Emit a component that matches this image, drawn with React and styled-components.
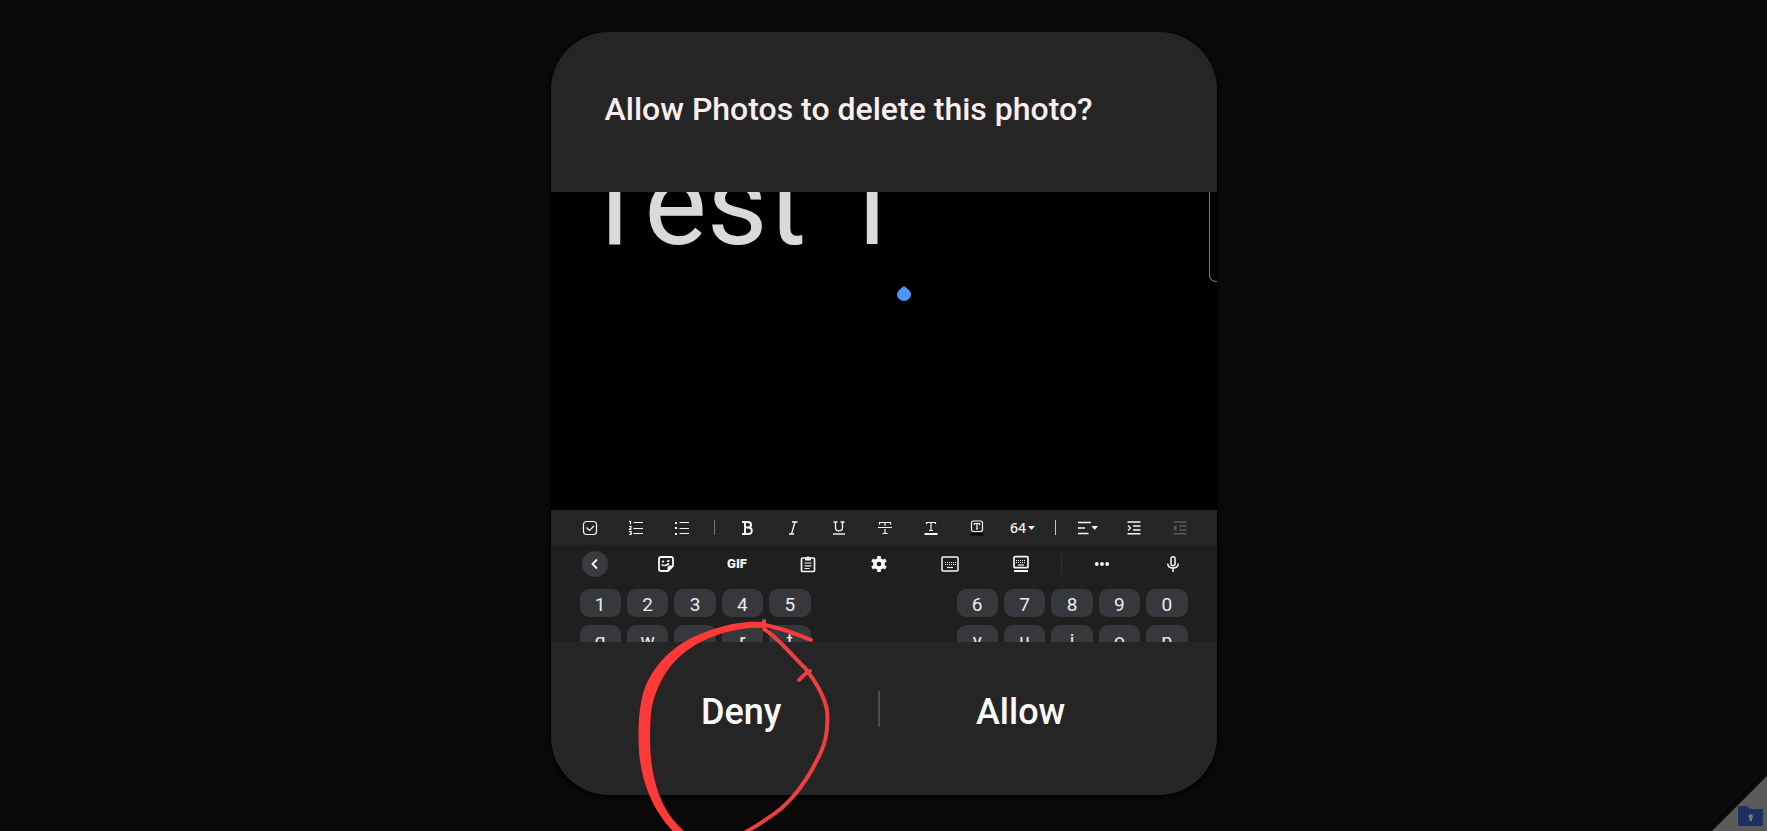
import React from "react";
import styled, { createGlobalStyle, css } from "styled-components";

const GlobalStyle = createGlobalStyle`
  *, *::before, *::after { box-sizing: border-box; }
  body { margin: 0; background: #0a0809; font-family: Roboto, "Liberation Sans", sans-serif; }
`;

const Page = styled.main`
  position: relative;
  display: flex;
  justify-content: center;
  align-items: flex-start;
  min-height: 100vh;
  padding: 32px 16px 36px;
  overflow: hidden;
`;

const Dialog = styled.section`
  position: relative;
  display: flex;
  flex-direction: column;
  width: 100%;
  max-width: 666px;
  border-radius: 58px;
  background: #252525;
  box-shadow: 0 2px 4px #000;
`;

const Title = styled.h1`
  margin: 0;
  padding: 53px 54px 59px;
  font-size: 32px;
  line-height: 48px;
  font-weight: 500;
  color: #f9eff1;
`;

const Preview = styled.div`
  display: flex;
  flex-direction: column;
  height: 450px;
  overflow: hidden;
  background: #1f1f1f;
`;

const Note = styled.div`
  position: relative;
  flex: none;
  height: 318px;
  overflow: hidden;
  background: #000;
`;

const NoteText = styled.p`
  margin: -60px 0 0 29px;
  font-size: 118px;
  line-height: 144px;
  color: #dadada;
  white-space: pre;
`;

const CursorHandle = styled.svg`
  position: absolute;
  left: 346px;
  top: 93px;
  width: 14px;
  height: 17px;
`;

const SideHandle = styled.div`
  position: absolute;
  right: 0;
  top: 0;
  width: 8px;
  height: 90px;
  border: solid #7a7a7a;
  border-width: 0 0 1px 1px;
  border-radius: 0 0 0 7px;
`;

const Bar = styled.div`
  display: flex;
  flex: none;
  align-items: center;
  color: #f6f6f6;
  ${(p) =>
    p.$format
      ? css`height: 35px; padding: 0 14px 0 16px; background: #252525;`
      : css`height: 38px; padding: 0 8px 0 9px;`}
`;

const Tool = styled.button`
  display: flex;
  flex: 1;
  align-items: center;
  justify-content: center;
  min-width: 0;
  height: 100%;
  padding: 0;
  border: 0;
  background: none;
  color: ${(p) => (p.$faded ? "#5e5e5e" : "inherit")};
  font: 500 14px/20px "Noto Sans", sans-serif;
`;

const Separator = styled.span`
  display: flex;
  flex: none;
  justify-content: center;
  width: ${(p) => p.$slot}px;
  &::before {
    content: "";
    width: 1px;
    height: ${(p) => p.$tall}px;
    background: ${(p) => p.$tone};
  }
`;

const BackCircle = styled.span`
  display: flex;
  align-items: center;
  justify-content: center;
  width: 26px;
  height: 26px;
  border-radius: 50%;
  background: #3a3b40;
`;

const Keys = styled.div`
  display: flex;
  flex: none;
  justify-content: space-between;
  padding: 6px 29px 2px;
`;

const KeyGroup = styled.div`
  display: grid;
  grid-template-columns: repeat(5, 1fr);
  gap: 6px;
  width: 38%;
  max-width: 231px;
`;

const Key = styled.button`
  height: 28px;
  padding: 3px 0 0;
  border: 0;
  border-radius: 9px;
  background: #37383c;
  color: #ececec;
  font: 400 19px/25px Roboto, sans-serif;
`;

const Actions = styled.div`
  display: grid;
  grid-template-columns: 33fr 2px 34fr;
  align-items: center;
  height: 153px;
  padding: 0 55px 20px 54px;
`;

const Action = styled.button`
  height: 72px;
  padding: 6px 0 0;
  border: 0;
  background: none;
  color: #fafafa;
  font: 500 36px/48px Roboto, sans-serif;
`;

const ActionDivider = styled.span`
  height: 36px;
  background: #4b4b4b;
`;

const Scribble = styled.svg`
  position: absolute;
  left: 84px;
  top: 582px;
  width: 182px;
  height: 220px;
  overflow: visible;
  pointer-events: none;
`;

const CornerFold = styled.svg`
  position: absolute;
  right: 0;
  bottom: 0;
  width: 56px;
  height: 56px;
`;

const Icon = ({ w = 16, h = 16, children, sw = 1.2 }) => (
  <svg width={w} height={h} viewBox={`0 0 ${w} ${h}`} fill="none" stroke="currentColor" strokeWidth={sw} aria-hidden="true">
    {children}
  </svg>
);

const dots = (xs, ys, s = 1) =>
  ys.flatMap((y) => xs.map((x) => <rect key={`${x}-${y}`} x={x} y={y} width={s} height={s} fill="currentColor" stroke="none" />));

const CheckIcon = () => (
  <Icon><rect x="1.5" y="1.5" width="13" height="13" rx="3" /><path d="M4.500 7.500L7.500 10.500L12 6" /></Icon>
);
const NumberedIcon = () => (
  <Icon>
    <path d="M5.500 2.500H15M5.500 8.500H15M5.500 13.500H15" />
    <path d="M1 1.500H2.500V4.500M1 6.500H3V8L1.500 9.500H3.500M1 11.500H3.200V14.500H1M2 13H3" />
  </Icon>
);
const BulletIcon = () => (
  <Icon><path d="M5.500 2.500H15M5.500 8.500H15M5.500 13.500H15" />{dots([1], [2, 7, 13], 2)}</Icon>
);
const BoldIcon = () => (
  <Icon sw="2"><path d="M3 2H9C13 2 13 7.500 9 7.500H5M9 7.500C14 7.500 14 14 9 14H3M6 2V14" /></Icon>
);
const ItalicIcon = () => (
  <Icon><path d="M7 2H12.500M4 14H9M10 2L6.500 14" strokeWidth="1.3" /></Icon>
);
const UnderlineIcon = () => (
  <Icon>
    <path d="M2.500 2H6.500M9.500 2H13.500M4.500 2V7.500C4.500 12 11.500 12 11.500 7.500V2" strokeWidth="1.3" />
    <path d="M2 14H14" strokeWidth="2" stroke="#b8b8b8" />
  </Icon>
);
const StrikeIcon = () => (
  <Icon><path d="M2.500 4.500V2.500H13.500V4.500M8 2.500V6M1 7.500H15M8 9V13.500M5.500 13.500H10.500" /></Icon>
);
const TextColorIcon = () => (
  <Icon><path d="M3.500 4V2.500H12.500V4M8 2.500V10M6 10.500H10" /><path d="M1.500 14H14.500" strokeWidth="2" /></Icon>
);
const HighlightIcon = () => (
  <Icon>
    <rect x="2.500" y="1" width="11" height="10.500" rx="2" />
    <path d="M5.500 5V3.500H10.500V5M8 3.500V9M7 9H9" />
    <path d="M1.500 14.500H14.500" stroke="#000" strokeWidth="2" />
  </Icon>
);
const AlignIcon = () => (
  <Icon w={22}>
    <path d="M1 2.500H14M1 8H8M1 13.500H11.500" strokeWidth="1.3" />
    <path d="M14.500 6H21L17.700 10Z" fill="currentColor" stroke="none" />
  </Icon>
);
const IndentIcon = ({ out }) => (
  <Icon>
    <path d="M1.500 2H14.500M7 6H14.500M7 10H14.500M1.500 13.700H14.500" strokeWidth="1.5" />
    <path d={out ? "M4.500 5.500L2 8L4.500 10.500M2 8H5.500" : "M2 5.500L4.500 8L2 10.500"} />
  </Icon>
);
const CaretIcon = () => (
  <Icon w={9} h={8}><path d="M2 2H9L5.500 6Z" fill="currentColor" stroke="none" /></Icon>
);
const BackIcon = () => (
  <Icon w={12} h={12} sw="1.8"><path d="M8 1.500L3.500 6L8 10.500" /></Icon>
);
const StickerIcon = () => (
  <Icon w={18} h={18} sw="1.8">
    <path d="M16 11V4Q16 2 14 2H4Q2 2 2 4V14Q2 16 4 16H11Z" />
    <path d="M16 11H12.500Q11 11 11 12.500V16Z" fill="currentColor" strokeWidth="1" />
    <path d="M5 7L7 6M10 6.500L12.500 5.500M4.500 9.500Q7.500 12 12 8.500" strokeWidth="1.6" />
  </Icon>
);
const GifWord = styled.span`
  font: 900 13px/16px Roboto, sans-serif;
`;
const ClipboardIcon = () => (
  <Icon w={18} h={18}>
    <rect x="2.500" y="3" width="13" height="13.500" rx="1" strokeWidth="1.7" />
    <path d="M6 2.500H7.500Q9 0 10.500 2.500H12V5.500H6Z" fill="currentColor" stroke="none" />
    <path d="M5.500 8H12.500M5.500 10.800H12.500M5.500 13.500H10.500" />
  </Icon>
);
const GearIcon = () => (
  <Icon w={18} h={18}>
    <circle cx="9" cy="9" r="4.100" strokeWidth="3.600" />
    <path d="M9 1V4M9 14V17M2.100 5L4.700 6.500M13.300 11.500L15.900 13M2.100 13L4.700 11.500M13.300 6.500L15.900 5" strokeWidth="3.600" />
  </Icon>
);
const KeyboardIcon = () => (
  <Icon w={18} h={18}>
    <rect x="1" y="2" width="16" height="14" rx="1" strokeWidth="1.500" />
    {dots([4, 6, 8, 10, 12, 14], [7, 9])}
    <path d="M6 12.500H12" />
  </Icon>
);
const FloatKeyboardIcon = () => (
  <Icon w={18} h={18}>
    <rect x="2" y="1.700" width="14" height="11" rx="1" strokeWidth="1.700" />
    {dots([4, 6, 8, 10, 12], [5, 7], 1)}
    <path d="M6 10H12" />
    <path d="M2 16H16" strokeWidth="2" />
  </Icon>
);
const MoreIcon = () => (
  <Icon><g fill="currentColor" stroke="none"><circle cx="2.800" cy="8" r="1.900" /><circle cx="8" cy="8" r="1.900" /><circle cx="13.200" cy="8" r="1.900" /></g></Icon>
);
const MicIcon = () => (
  <Icon w={14} h={18} sw="1.500">
    <rect x="5" y="1.700" width="4" height="9" rx="2" />
    <path d="M1.700 8.500Q2 13 7 13Q12 13 12.300 8.500M7 13V17" />
  </Icon>
);

const formatTools = [
  ["Checklist", <CheckIcon />], ["Numbered list", <NumberedIcon />], ["Bulleted list", <BulletIcon />], null,
  ["Bold", <BoldIcon />], ["Italic", <ItalicIcon />], ["Underline", <UnderlineIcon />],
  ["Strikethrough", <StrikeIcon />], ["Text colour", <TextColorIcon />], ["Highlight", <HighlightIcon />],
  ["Font size", <>64<CaretIcon /></>], null,
  ["Alignment", <AlignIcon />], ["Increase indent", <IndentIcon />], ["Decrease indent", <IndentIcon out />, true],
];

const keyboardTools = [
  ["Back", <BackCircle><BackIcon /></BackCircle>], ["Stickers", <StickerIcon />], ["GIF", <GifWord>GIF</GifWord>],
  ["Clipboard", <ClipboardIcon />], ["Settings", <GearIcon />], ["Keyboard", <KeyboardIcon />],
  ["Keyboard size", <FloatKeyboardIcon />], null, ["More", <MoreIcon />], ["Voice input", <MicIcon />],
];

const ToolBar = ({ tools, format }) => (
  <Bar $format={format}>
    {tools.map((tool, i) =>
      tool ? (
        <Tool key={i} aria-label={tool[0]} $faded={tool[2]}>{tool[1]}</Tool>
      ) : (
        <Separator key={i} $slot={format ? 19 : 10} $tall={format ? 15 : 19} $tone={!format ? "#303030" : i > 8 ? "#c4c4c4" : "#777"} />
      )
    )}
  </Bar>
);

const KeyRow = ({ left, right }) => (
  <Keys>
    {[left, right].map((group) => (
      <KeyGroup key={group}>{[...group].map((k) => <Key key={k}>{k}</Key>)}</KeyGroup>
    ))}
  </Keys>
);

export default function App() {
  return (
    <>
      <GlobalStyle />
      <Page>
        <Dialog aria-label="Delete permission">
          <Title>Allow Photos to delete this photo?</Title>
          <Preview>
            <Note>
              <NoteText>Test 1</NoteText>
              <CursorHandle viewBox="0 0 14 17">
                <path d="M7 1C9 3 14 5.500 14 9.500A7 6.500 0 0 1 0 9.500C0 5.500 5 3 7 1Z" fill="#4797ff" />
              </CursorHandle>
              <SideHandle />
            </Note>
            <ToolBar tools={formatTools} format />
            <ToolBar tools={keyboardTools} />
            <KeyRow left="12345" right="67890" />
            <KeyRow left="qwert" right="yuiop" />
          </Preview>
          <Actions>
            <Action>Deny</Action>
            <ActionDivider />
            <Action>Allow</Action>
          </Actions>
          <Scribble viewBox="635 614 182 220">
            <path
              d="M763 622C735 620 700 631 678 646C660 659 650 674 644 690C638 710 638 732 639 752C641 775 648 796 658 812C664 821 670 829 676 834L690 836C673 823 662 807 656 785C650 764 649 742 651 713C653 696 660 682 667 671C682 650 702 639 727 632C740 629 750 627 763 628Z"
              fill="#ff3838"
            />
            <g fill="none" stroke="#fb3c3c" strokeWidth="4" strokeLinecap="round" strokeLinejoin="round">
              <path d="M763 625C780 627 796 634 811 640" />
              <path d="M764 621L764 629C777 637 792 655 805 668C816 682 824 695 827 710C829 733 824 748 816 762C803 788 785 808 768 818C757 826 748 831 740 835" stroke="#ed3f3e" />
              <path d="M799 680Q804 674 810 671" stroke="#ed3f3e" />
            </g>
          </Scribble>
        </Dialog>
        <CornerFold viewBox="0 0 56 56">
          <path d="M56 1V56H1Z" fill="#5b5b5b" />
          <path d="M27 32Q27 31 28 31H36L39 34H51Q52 34 52 35V50Q52 51 51 51H28Q27 51 27 50Z" fill="#1c3160" />
          <path d="M39.500 39A2.500 2.500 0 0 1 41 43.500V46H38.500V43.500A2.500 2.500 0 0 1 39.500 39Z" fill="#777" />
        </CornerFold>
      </Page>
    </>
  );
}
